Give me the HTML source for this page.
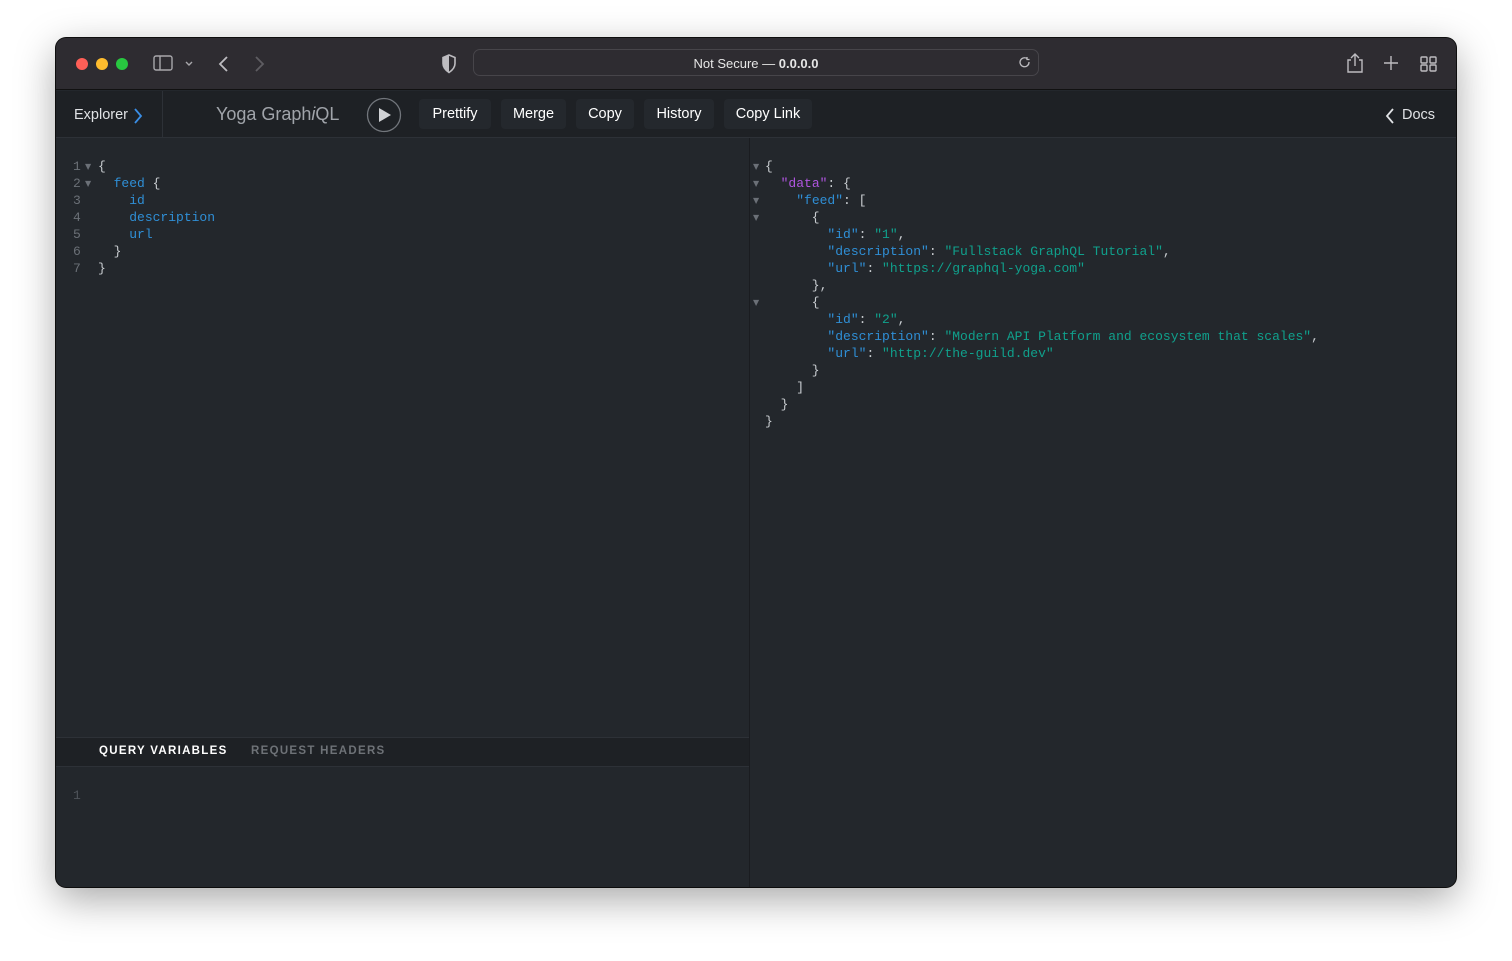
<!DOCTYPE html>
<html><head><meta charset="utf-8"><style>
*{margin:0;padding:0;box-sizing:border-box}
body{width:1512px;height:961px;background:#fff;font-family:"Liberation Sans",sans-serif;position:relative;overflow:hidden}
.win{position:absolute;left:56px;top:38px;width:1400px;height:849px;border-radius:10px;overflow:hidden;background:#23272c;box-shadow:0 12px 40px rgba(0,0,0,.35),0 0 0 1px #111}
.title{position:absolute;left:0;top:0;width:1400px;height:52px;background:#2e2c31;border-bottom:1px solid #111}
.dot{position:absolute;top:20px;width:12px;height:12px;border-radius:50%}
.url{position:absolute;left:417px;top:11px;width:566px;height:27px;border:1px solid #47454a;border-radius:7px;color:#e6e6e6;font-size:13px;text-align:center;line-height:28px}
.tb{position:absolute;left:0;top:53px;width:1400px;height:47px;background:#1e2125;border-bottom:1px solid #2d3137}
.btn{position:absolute;top:8px;height:30px;background:#24282d;border-radius:4px;color:#fff;font-size:14.5px;line-height:31px;text-align:center}
.code{position:absolute;font-family:"Liberation Mono",monospace;font-size:13px;line-height:17px;white-space:pre;color:#c8ccd0}
.ln{color:#6b7077}
.k{color:#2f8fd6}.p{color:#b055e0}.s{color:#10a08c}
.ar{position:absolute;color:#6b7077;font-size:8px;line-height:17px;font-family:"DejaVu Sans",sans-serif}
</style></head><body>
<div class="win">
<div class="title">
<div class="dot" style="left:20px;background:#fe5f57"></div>
<div class="dot" style="left:40px;background:#febc2e"></div>
<div class="dot" style="left:60px;background:#28c840"></div>
<svg style="position:absolute;left:97px;top:17px" width="60" height="18" fill="none" stroke="#a8a7ab" stroke-width="1.4"><rect x="1" y="1" width="18" height="14" rx="2"/><line x1="7" y1="1" x2="7" y2="15"/><path d="M33 7l3 3 3-3"/></svg>
<svg style="position:absolute;left:160px;top:16px" width="50" height="20" fill="none" stroke-width="1.8"><path d="M11 3l-7 7 7 7" stroke="#bdbcc0"/><path d="M40 3l7 7-7 7" stroke="#5e5d62"/></svg>
<svg style="position:absolute;left:385px;top:16px" width="16" height="20"><path d="M8 1L2 3.5v6c0 4 3 7 6 9 3-2 6-5 6-9v-6z" fill="none" stroke="#bdbcc0" stroke-width="1.6"/><path d="M8 1L2 3.5v6c0 4 3 7 6 9z" fill="#bdbcc0"/></svg>
<div class="url">Not Secure — <b style="font-weight:600">0.0.0.0</b>
<svg style="position:absolute;right:6px;top:6px" width="14" height="14" fill="none" stroke="#bdbcc0" stroke-width="1.3"><path d="M11 6a4.5 4.5 0 1 1-2-3.5"/><path d="M9 1v2.5h2.5"/></svg></div>
<svg style="position:absolute;left:1288px;top:14px" width="120" height="24" fill="none" stroke="#bdbcc0" stroke-width="1.4"><path d="M7 8H4v12h14V8h-3M11 14V2M7 6l4-4 4 4"/><path d="M47 4v14M40 11h14"/><rect x="77" y="5" width="6" height="6" rx="1"/><rect x="86" y="5" width="6" height="6" rx="1"/><rect x="77" y="13" width="6" height="6" rx="1"/><rect x="86" y="13" width="6" height="6" rx="1"/></svg>
</div>
<div class="tb">
<div style="position:absolute;left:18px;top:16px;color:#e0e2e5;font-size:14.5px">Explorer</div>
<svg style="position:absolute;left:76px;top:16px" width="12" height="18" fill="none" stroke="#3a8ee6" stroke-width="1.8"><path d="M3 2l6 7-6 7"/></svg>
<div style="position:absolute;left:106px;top:0;width:1px;height:46px;background:#2d3137"></div>
<div style="position:absolute;left:160px;top:13px;color:#a0a4aa;font-size:18px">Yoga Graph<i>i</i>QL</div>
<svg style="position:absolute;left:310px;top:6px" width="36" height="36"><circle cx="18" cy="18" r="16.5" fill="none" stroke="#72767c" stroke-width="1.3"/><path d="M13 11v14l12-7z" fill="#d0d2d5"/></svg>
<div class="btn" style="left:363px;width:72px">Prettify</div>
<div class="btn" style="left:445px;width:65px">Merge</div>
<div class="btn" style="left:520px;width:58px">Copy</div>
<div class="btn" style="left:588px;width:70px">History</div>
<div class="btn" style="left:668px;width:88px">Copy Link</div>
<svg style="position:absolute;left:1328px;top:16px" width="12" height="18" fill="none" stroke="#e0e2e5" stroke-width="1.8"><path d="M9 2L3 9l6 7"/></svg>
<div style="position:absolute;left:1346px;top:16px;color:#e0e2e5;font-size:14.5px">Docs</div>
</div>
<div style="position:absolute;left:693px;top:100px;width:1px;height:749px;background:#1a1c20"></div>

<div class="code ln" style="left:17px;top:120px">1
2
3
4
5
6
7</div>
<div class="ar" style="left:29px;top:120px">▼</div>
<div class="ar" style="left:29px;top:137px">▼</div>
<div class="code" style="left:42px;top:120px">{
  <span class="k">feed</span> {
    <span class="k">id</span>
    <span class="k">description</span>
    <span class="k">url</span>
  }
}</div>

<div class="ar" style="left:697px;top:120px">▼</div>
<div class="ar" style="left:697px;top:137px">▼</div>
<div class="ar" style="left:697px;top:154px">▼</div>
<div class="ar" style="left:697px;top:171px">▼</div>
<div class="ar" style="left:697px;top:256px">▼</div>
<div class="code" style="left:709px;top:120px">{
  <span class="p">"data"</span>: {
    <span class="k">"feed"</span>: [
      {
        <span class="k">"id"</span>: <span class="s">"1"</span>,
        <span class="k">"description"</span>: <span class="s">"Fullstack GraphQL Tutorial"</span>,
        <span class="k">"url"</span>: <span class="s">"https://graphql-yoga.com"</span>
      },
      {
        <span class="k">"id"</span>: <span class="s">"2"</span>,
        <span class="k">"description"</span>: <span class="s">"Modern API Platform and ecosystem that scales"</span>,
        <span class="k">"url"</span>: <span class="s">"http://the-guild.dev"</span>
      }
    ]
  }
}</div>
<div style="position:absolute;left:0;top:699px;width:693px;height:30px;background:#1e2125;border-top:1px solid #2d3137;border-bottom:1px solid #2d3137"></div>
<div style="position:absolute;left:43px;top:707px;font-size:11.5px;font-weight:bold;letter-spacing:1.3px;color:#fff">QUERY VARIABLES</div>
<div style="position:absolute;left:195px;top:707px;font-size:11.5px;font-weight:bold;letter-spacing:1.3px;color:#6e7277">REQUEST HEADERS</div>
<div class="code" style="left:17px;top:749px"><span class="ln" style="color:#4f545a">1</span></div>
</div>
</body></html>
